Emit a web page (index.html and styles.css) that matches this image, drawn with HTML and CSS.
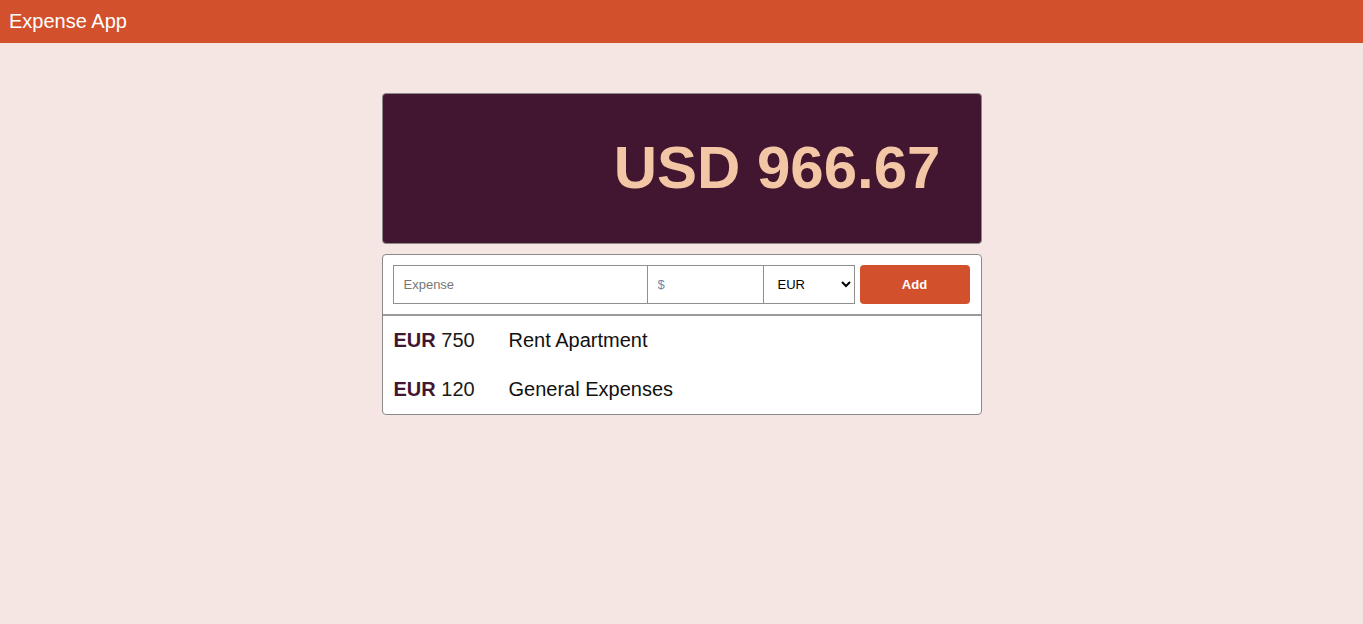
FILE: index.html
```html
<!DOCTYPE html>
<html>
<head>
<meta charset="utf-8">
<title>Expense App</title>
<link rel="stylesheet" href="styles.css">
</head>
<body>
<header class="topbar">Expense App</header>
<main class="content">
  <section class="total-card">
    <div class="total">USD 966.67</div>
  </section>
  <section class="expense-card">
    <form class="expense-form">
      <input class="field field-name" type="text" placeholder="Expense">
      <input class="field field-amount" type="text" placeholder="$">
      <select class="field field-currency">
        <option>EUR</option>
        <option>USD</option>
      </select>
      <button class="add-btn" type="button">Add</button>
    </form>
    <ul class="expense-list">
      <li class="expense-item"><span class="amount"><b class="cur">EUR</b> 750</span><span class="desc">Rent Apartment</span></li>
      <li class="expense-item"><span class="amount"><b class="cur">EUR</b> 120</span><span class="desc">General Expenses</span></li>
    </ul>
  </section>
</main>
</body>
</html>
```
FILE: styles.css
```css
* { box-sizing: border-box; }
html, body { margin: 0; padding: 0; }
body {
  background: #f5e6e3;
  font-family: "Liberation Sans", Arial, sans-serif;
  min-height: 624px;
}
.topbar {
  height: 43px;
  background: #d3502c;
  color: #ffffff;
  font-size: 20px;
  line-height: 43px;
  padding-left: 9px;
}
.content {
  width: 600px;
  margin: 50px auto 0;
  display: flex;
  flex-direction: column;
  gap: 10px;
}
.total-card {
  height: 151px;
  background: #421530;
  border: 1px solid #8a8a8a;
  border-radius: 4px;
  display: flex;
  align-items: center;
  justify-content: flex-end;
  padding-right: 40px;
}
.total {
  color: #f3c6a5;
  font-weight: bold;
  font-size: 60px;
  line-height: 1;
  margin-bottom: 2px;
}
.expense-card {
  background: #ffffff;
  border: 1px solid #8a8a8a;
  border-radius: 4px;
}
.expense-form {
  display: flex;
  align-items: center;
  padding: 10px 11px 10px 10px;
  border-bottom: 2px solid #9a9a9a;
}
.field {
  height: 39px;
  border: 1px solid #8f8f8f;
  background: #fff;
  font-family: "Liberation Sans", Arial, sans-serif;
  font-size: 13px;
  margin: 0;
  border-radius: 0;
}
.field-name { width: 255px; padding: 0 10px; }
.field-amount { width: 117px; padding: 0 10px; margin-left: -1px; }
.field-amount::placeholder { color: #6f8aa8; }
.field-name::placeholder { color: #777; }
.field-currency { width: 92px; padding: 0 10px; margin-left: -1px; color: #000; }
.add-btn {
  margin-left: 5px;
  width: 110px;
  height: 39px;
  background: #d3502c;
  color: #fff;
  border: 0;
  border-radius: 4px;
  font-family: "Liberation Sans", Arial, sans-serif;
  font-weight: bold;
  font-size: 13px;
}
.expense-list {
  list-style: none;
  margin: 0;
  padding: 0;
}
.expense-item {
  height: 49px;
  display: flex;
  align-items: center;
  padding-left: 11px;
  font-size: 20px;
  color: #1a1a1a;
}
.amount { width: 115px; }
.cur { color: #421530; }
.desc { color: #111; }
```
